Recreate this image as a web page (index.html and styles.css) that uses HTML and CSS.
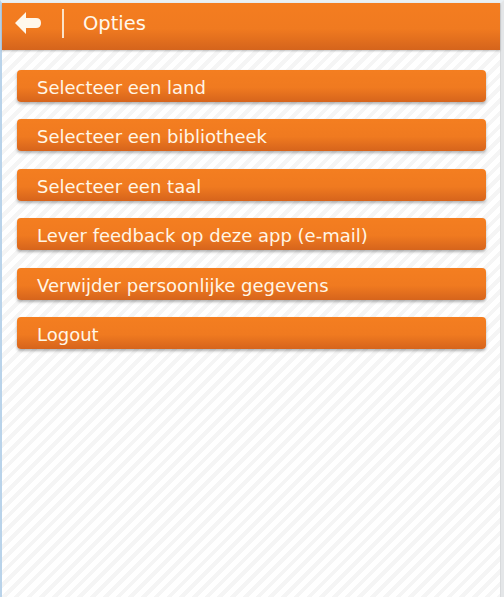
FILE: index.html
```html
<!DOCTYPE html>
<html>
<head>
<meta charset="utf-8">
<link rel="stylesheet" href="styles.css">
</head>
<body>
<div class="frame">
  <div class="page">
    <header class="bar">
      <span class="back">
        <svg width="26" height="22" viewBox="0 0 26 22"><path d="M0 11 L11 0 L11 6 L21 6 Q26 6 26 11 Q26 16 21 16 L11 16 L11 22 Z" fill="#fff8ec"/></svg>
      </span>
      <span class="sep"></span>
      <h1 class="title">Opties</h1>
    </header>
    <nav class="menu">
      <a class="btn">Selecteer een land</a>
      <a class="btn">Selecteer een bibliotheek</a>
      <a class="btn">Selecteer een taal</a>
      <a class="btn">Lever feedback op deze app (e-mail)</a>
      <a class="btn">Verwijder persoonlijke gegevens</a>
      <a class="btn">Logout</a>
    </nav>
  </div>
</div>
</body>
</html>
```
FILE: styles.css
```css
html, body { margin: 0; padding: 0; }
body {
  width: 504px;
  height: 597px;
  overflow: hidden;
  font-family: "DejaVu Sans", Verdana, sans-serif;
  background: #eef0f2;
}
.frame {
  height: 597px;
  border-left: 2px solid #b9d3ea;
  border-right: 3px solid #e4e6e8;
  border-top: 3px solid #eaf0f4;
  box-sizing: border-box;
}
.page {
  height: 100%;
  background-color: #ffffff;
  background-image: repeating-linear-gradient(135deg, #ffffff 0 5px, #f5f5f5 5px 9px);
  border-right: 1px solid #d8dadc;
}
.bar {
  height: 47px;
  box-sizing: border-box;
  padding-bottom: 6px;
  display: flex;
  align-items: center;
  background: linear-gradient(#f47d20, #f07a20 55%, #d5641c);
  box-shadow: 0 1px 2px rgba(0,0,0,0.25);
}
.back {
  width: 26px;
  height: 22px;
  margin-left: 13px;
  margin-top: -2px;
  display: flex;
}
.sep {
  width: 2px;
  height: 29px;
  margin-left: 21px;
  background: #fbe3c8;
}
.title {
  margin: 0 0 0 19px;
  font-weight: normal;
  font-size: 19.5px;
  color: #fff8ec;
}
.menu {
  display: flex;
  flex-direction: column;
  gap: 17.4px;
  padding: 20px 0 0 15px;
  width: 469px;
}
.btn {
  display: block;
  height: 32px;
  line-height: 36px;
  padding-left: 20px;
  border-radius: 4px;
  font-size: 18px;
  color: #fff6e6;
  background: linear-gradient(#f47e20, #f07a20 55%, #d6641c);
  box-shadow: 0 2px 3px rgba(0,0,0,0.3);
}
```
